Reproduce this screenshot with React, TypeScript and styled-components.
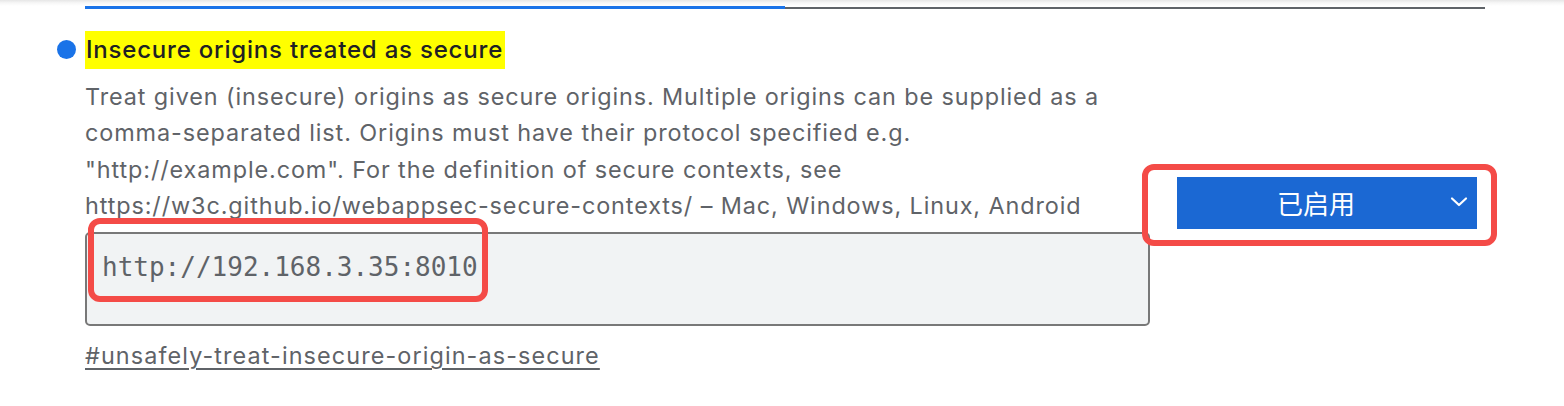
import React from "react";
import styled, { createGlobalStyle } from "styled-components";

const GlobalStyle = createGlobalStyle`
  html, body {
    margin: 0;
    padding: 0;
    background: #ffffff;
  }
  body {
    font-family: Inter, "Noto Sans", "Liberation Sans", sans-serif;
  }
`;

const Page = styled.div`
  position: relative;
  width: 1564px;
  height: 406px;
  overflow: hidden;
  background: #ffffff;
`;

const TabStrip = styled.div`
  display: flex;
  align-items: flex-end;
  height: 9px;
  padding-left: 85px;
  background: linear-gradient(180deg, #e6e6e6 0px, #f7f7f7 3px, #ffffff 6px);
`;

const Tab = styled.div<{ active?: boolean }>`
  width: 700px;
  height: ${(p) => (p.active ? "3px" : "2px")};
  background: ${(p) => (p.active ? "#1a73e8" : "#5f6368")};
`;

const Experiment = styled.div`
  display: flex;
  padding: 22px 0 0 57px;
`;

const Marker = styled.span`
  flex: none;
  width: 19px;
  height: 19px;
  margin-top: 9px;
  border-radius: 50%;
  background: #1a73e8;
`;

const Main = styled.div`
  display: flex;
  align-items: center;
  margin-left: 9px;
`;

const Details = styled.div`
  width: 1065px;
`;

const Title = styled.h2`
  margin: 0;
  font-size: 24px;
  font-weight: 500;
  line-height: 38px;
  letter-spacing: 0.8px;
  color: #202124;
`;

const Highlight = styled.mark`
  display: inline-block;
  padding: 0 2px 0 1px;
  background: #ffff00;
  color: inherit;
`;

const Description = styled.p`
  max-width: 1028px;
  margin: 10px 0 0;
  font-size: 23.4px;
  line-height: 36.3px;
  letter-spacing: 0.9px;
  color: #5f6368;
`;

const OriginList = styled.div`
  box-sizing: border-box;
  height: 94px;
  margin-top: 8px;
  padding: 17px 15px;
  border: 2px solid #787878;
  border-radius: 5px;
  background: #f1f3f4;
  font-family: "DejaVu Sans Mono", "Liberation Mono", monospace;
  font-size: 26px;
  line-height: 32px;
  color: #5f6368;
`;

const FlagLink = styled.a`
  display: inline-block;
  margin-top: 12px;
  font-size: 23.4px;
  line-height: 36px;
  letter-spacing: 1.1px;
  color: #5f6368;
  text-decoration: underline;
  text-underline-offset: 4px;
  text-decoration-thickness: 1.5px;
`;

const Control = styled.div`
  margin-left: 27px;
`;

const Select = styled.div`
  position: relative;
  display: flex;
  align-items: center;
  justify-content: center;
  box-sizing: border-box;
  width: 300px;
  height: 52px;
  padding-right: 22px;
  background: #1b68d3;
  color: #ffffff;
  font-family: "Noto Sans CJK SC", "Noto Sans", sans-serif;
  font-size: 26px;
`;

const Chevron = styled.svg`
  position: absolute;
  right: 9px;
  top: 19px;
`;

const Annotation = styled.div<{ x: number; y: number; w: number; h: number }>`
  position: absolute;
  left: ${(p) => p.x}px;
  top: ${(p) => p.y}px;
  width: ${(p) => p.w}px;
  height: ${(p) => p.h}px;
  box-sizing: border-box;
  border: 6px solid #f44b47;
  border-radius: 12px;
  pointer-events: none;
`;

export default function App() {
  return (
    <Page>
      <GlobalStyle />
      <TabStrip>
        <Tab active />
        <Tab />
      </TabStrip>
      <Experiment>
        <Marker />
        <Main>
          <Details>
            <Title>
              <Highlight>Insecure origins treated as secure</Highlight>
            </Title>
            <Description>
              Treat given (insecure) origins as secure origins. Multiple origins can be supplied as a
              comma-separated list. Origins must have their protocol specified e.g.
              "http://example.com". For the definition of secure contexts, see
              https://w3c.github.io/webappsec-secure-contexts/ – Mac, Windows, Linux, Android
            </Description>
            <OriginList>http://192.168.3.35:8010</OriginList>
            <FlagLink href="#unsafely-treat-insecure-origin-as-secure">
              #unsafely-treat-insecure-origin-as-secure
            </FlagLink>
          </Details>
          <Control>
            <Select>
              已启用
              <Chevron width="18" height="12" viewBox="0 0 18 12">
                <path d="M2 2.5 L9 9 L16 2.5" fill="none" stroke="#ffffff" strokeWidth="2.2" strokeLinecap="round" strokeLinejoin="round" />
              </Chevron>
            </Select>
          </Control>
        </Main>
      </Experiment>
      <Annotation x={88} y={218} w={400} h={84} />
      <Annotation x={1142} y={164} w={355} h={82} />
    </Page>
  );
}
